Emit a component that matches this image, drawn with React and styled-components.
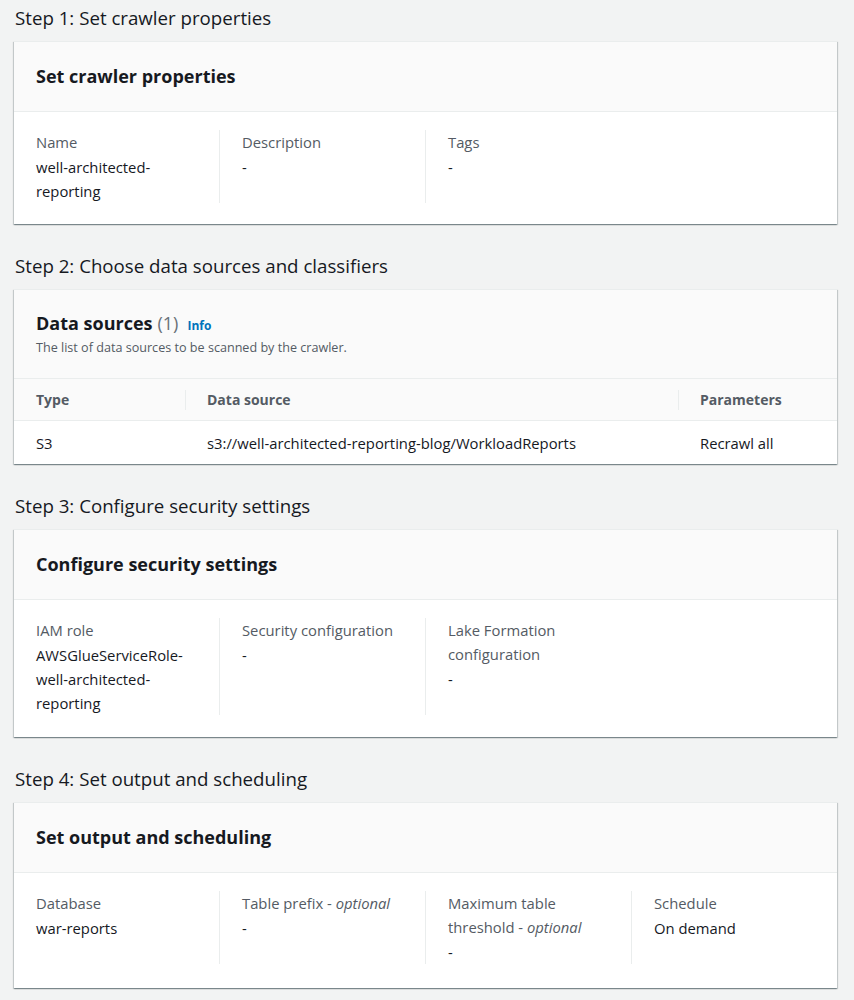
import React from 'react';
import styled, { createGlobalStyle } from 'styled-components';

const GlobalStyle = createGlobalStyle`
  * { box-sizing: border-box; }
  body {
    margin: 0;
    background: #f2f3f3;
    font-family: "Open Sans", "Noto Sans", sans-serif;
    color: #16191f;
  }
`;

const Page = styled.div`
  display: flex;
  flex-direction: column;
  gap: 30px;
  padding: 6px 17px 20px 14px;
`;

const Section = styled.section`
  display: flex;
  flex-direction: column;
  gap: 11px;
`;

const StepTitle = styled.h2`
  margin: 0;
  padding-left: 1px;
  font-size: 18.7px;
  line-height: 24px;
  font-weight: 400;
  color: #16191f;
`;

const Card = styled.div`
  background: #fff;
  border-top: 1px solid #eaeded;
  box-shadow: 0 1px 1px 0 rgba(0, 28, 36, 0.3),
    1px 1px 1px 0 rgba(0, 28, 36, 0.15),
    -1px 1px 1px 0 rgba(0, 28, 36, 0.15);
`;

const CardHeader = styled.div`
  background: #fafafa;
  border-bottom: 1px solid #eaeded;
  padding: ${(p) => (p.$tall ? '21px 22px 22px' : '22px 22px 23px')};
`;

const CardTitle = styled.h3`
  margin: 0;
  font-size: 18px;
  line-height: 24px;
  font-weight: 700;
  color: #16191f;
  display: flex;
  align-items: baseline;
`;

const Count = styled.span`
  font-weight: 400;
  color: #687078;
  margin-left: 5px;
`;

const InfoLink = styled.a`
  font-size: 12px;
  font-weight: 700;
  color: #0073bb;
  margin-left: 9px;
  text-decoration: none;
`;

const Subtitle = styled.p`
  margin: 2px 0 0;
  font-size: 12.6px;
  line-height: 16px;
  color: #545b64;
`;

const Body = styled.div`
  display: flex;
  padding: 18px 0 ${(p) => p.$bottom || 21}px;
`;

const Column = styled.div`
  flex: 0 0 206px;
  padding: 0 20px 0 22px;
  border-right: 1px solid #eaeded;
  font-size: 14.8px;
  line-height: 24px;

  &:last-child {
    border-right: none;
  }
`;

const Label = styled.div`
  color: #545b64;
  margin-bottom: 1px;

  em {
    font-style: italic;
  }
`;

const Value = styled.div`
  color: #16191f;
`;

const Table = styled.div`
  display: grid;
  grid-template-columns: 171px 493px 1fr;
  font-size: 14px;
`;

const HeadCell = styled.div`
  position: relative;
  background: #fafafa;
  border-bottom: 1px solid #eaeded;
  height: 42px;
  display: flex;
  align-items: center;
  padding-left: 22px;
  font-weight: 700;
  color: #545b64;

  & + &::before {
    content: '';
    position: absolute;
    left: 0;
    top: 11px;
    height: 20px;
    border-left: 1px solid #eaeded;
  }
`;

const Cell = styled.div`
  height: 43px;
  display: flex;
  align-items: center;
  padding-left: 22px;
  font-size: 14.8px;
  color: #16191f;
`;

function Field({ label, value }) {
  return (
    <Column>
      <Label>{label}</Label>
      <Value>{value}</Value>
    </Column>
  );
}

export default function App() {
  return (
    <>
      <GlobalStyle />
      <Page>
        <Section>
          <StepTitle>Step 1: Set crawler properties</StepTitle>
          <Card>
            <CardHeader>
              <CardTitle>Set crawler properties</CardTitle>
            </CardHeader>
            <Body>
              <Field label="Name" value="well-architected-reporting" />
              <Field label="Description" value="-" />
              <Field label="Tags" value="-" />
            </Body>
          </Card>
        </Section>

        <Section>
          <StepTitle>Step 2: Choose data sources and classifiers</StepTitle>
          <Card>
            <CardHeader $tall>
              <CardTitle>
                Data sources<Count>(1)</Count>
                <InfoLink href="#">Info</InfoLink>
              </CardTitle>
              <Subtitle>The list of data sources to be scanned by the crawler.</Subtitle>
            </CardHeader>
            <Table>
              <HeadCell>Type</HeadCell>
              <HeadCell>Data source</HeadCell>
              <HeadCell>Parameters</HeadCell>
              <Cell>S3</Cell>
              <Cell>s3://well-architected-reporting-blog/WorkloadReports</Cell>
              <Cell>Recrawl all</Cell>
            </Table>
          </Card>
        </Section>

        <Section>
          <StepTitle>Step 3: Configure security settings</StepTitle>
          <Card>
            <CardHeader>
              <CardTitle>Configure security settings</CardTitle>
            </CardHeader>
            <Body $bottom={22}>
              <Field label="IAM role" value="AWSGlueServiceRole-well-architected-reporting" />
              <Field label="Security configuration" value="-" />
              <Field label="Lake Formation configuration" value="-" />
            </Body>
          </Card>
        </Section>

        <Section>
          <StepTitle>Step 4: Set output and scheduling</StepTitle>
          <Card>
            <CardHeader>
              <CardTitle>Set output and scheduling</CardTitle>
            </CardHeader>
            <Body $bottom={24}>
              <Field label="Database" value="war-reports" />
              <Field label={<>Table prefix - <em>optional</em></>} value="-" />
              <Field label={<>Maximum table threshold - <em>optional</em></>} value="-" />
              <Field label="Schedule" value="On demand" />
            </Body>
          </Card>
        </Section>
      </Page>
    </>
  );
}
